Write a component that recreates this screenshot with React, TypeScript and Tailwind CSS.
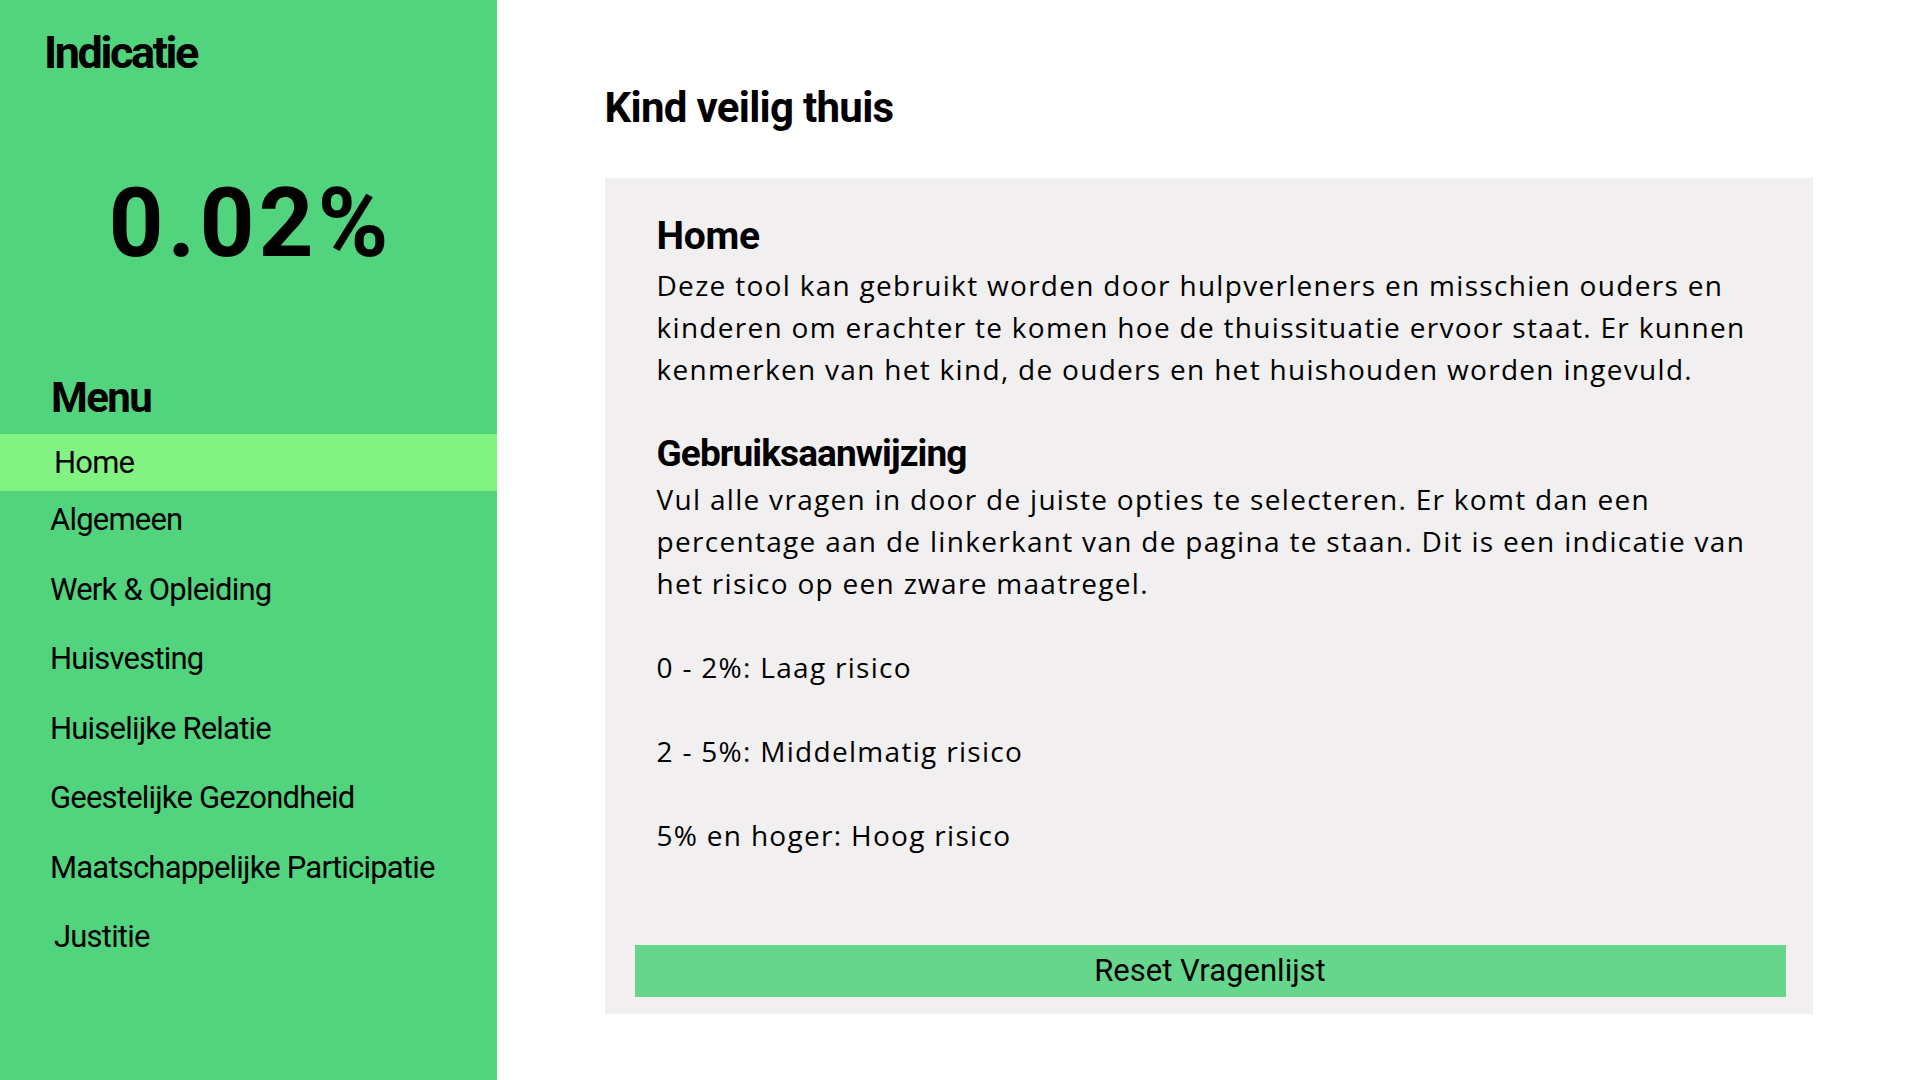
import React from 'react';

const menuItems = [
  { label: 'Home', active: true, indent: true },
  { label: 'Algemeen' },
  { label: 'Werk & Opleiding' },
  { label: 'Huisvesting' },
  { label: 'Huiselijke Relatie' },
  { label: 'Geestelijke Gezondheid' },
  { label: 'Maatschappelijke Participatie' },
  { label: 'Justitie', indent: true },
];

const heading = { fontFamily: 'Roboto, "Liberation Sans", sans-serif' };
const body = { fontFamily: '"Open Sans", "Liberation Sans", sans-serif' };

export default function App() {
  return (
    <div className="flex h-screen w-full bg-white text-black" style={heading}>
      <aside className="w-[497px] shrink-0 bg-[#52d47f] flex flex-col">
        <h1 className="mt-[30px] ml-[44px] text-[45px] leading-[45px] font-bold tracking-[-2.4px]">Indicatie</h1>
        <div className="mt-[100px] pl-[4px] text-center text-[96px] leading-[96px] font-bold tracking-[4px]">0.02%</div>
        <h2 className="mt-[106px] ml-[51px] text-[42px] leading-[42px] font-bold tracking-[-1.6px]">Menu</h2>
        <nav className="mt-[15px] flex flex-col text-[31px] tracking-[-0.8px]">
          {menuItems.map((item) =>
            item.active ? (
              <div key={item.label} className="h-[57px] bg-[#82f283] pl-[54px] leading-[57px]">
                {item.label}
              </div>
            ) : (
              <div
                key={item.label}
                className={`h-[69.5px] leading-[57px] ${item.indent ? 'pl-[54px]' : 'pl-[50px]'}`}
              >
                {item.label}
              </div>
            )
          )}
        </nav>
      </aside>

      <main className="flex-1 px-[107.5px]">
        <h1 className="mt-[86.5px] text-[42px] leading-[42px] font-bold tracking-[-0.7px]">Kind veilig thuis</h1>
        <section className="mt-[49.5px] bg-[#f1eff0] pt-[39px] pb-[17px]">
          <div className="px-[52px]">
            <h2 className="text-[39px] leading-[39px] font-bold tracking-[-0.3px]">Home</h2>
            <p className="mt-[8px] text-[28px] leading-[42px] tracking-[1.3px]" style={body}>
              Deze tool kan gebruikt worden door hulpverleners en misschien ouders en kinderen om erachter te komen hoe de
              thuissituatie ervoor staat. Er kunnen kenmerken van het kind, de ouders en het huishouden worden ingevuld.
            </p>
            <h2 className="mt-[45px] text-[37px] leading-[37px] font-bold tracking-[-0.9px]">Gebruiksaanwijzing</h2>
            <div className="mt-[6px] flex flex-col gap-[42px] text-[28px] leading-[42px] tracking-[1.3px]" style={body}>
              <p>
                Vul alle vragen in door de juiste opties te selecteren. Er komt dan een percentage aan de linkerkant van de
                pagina te staan. Dit is een indicatie van het risico op een zware maatregel.
              </p>
              <p>0 - 2%: Laag risico</p>
              <p>2 - 5%: Middelmatig risico</p>
              <p>5% en hoger: Hoog risico</p>
            </div>
          </div>
          <button className="mt-[89px] ml-[30px] mr-[27px] block w-[calc(100%-57px)] h-[52px] bg-[#66d68c] text-[31px] leading-[52px] text-center">
            Reset Vragenlijst
          </button>
        </section>
      </main>
    </div>
  );
}
